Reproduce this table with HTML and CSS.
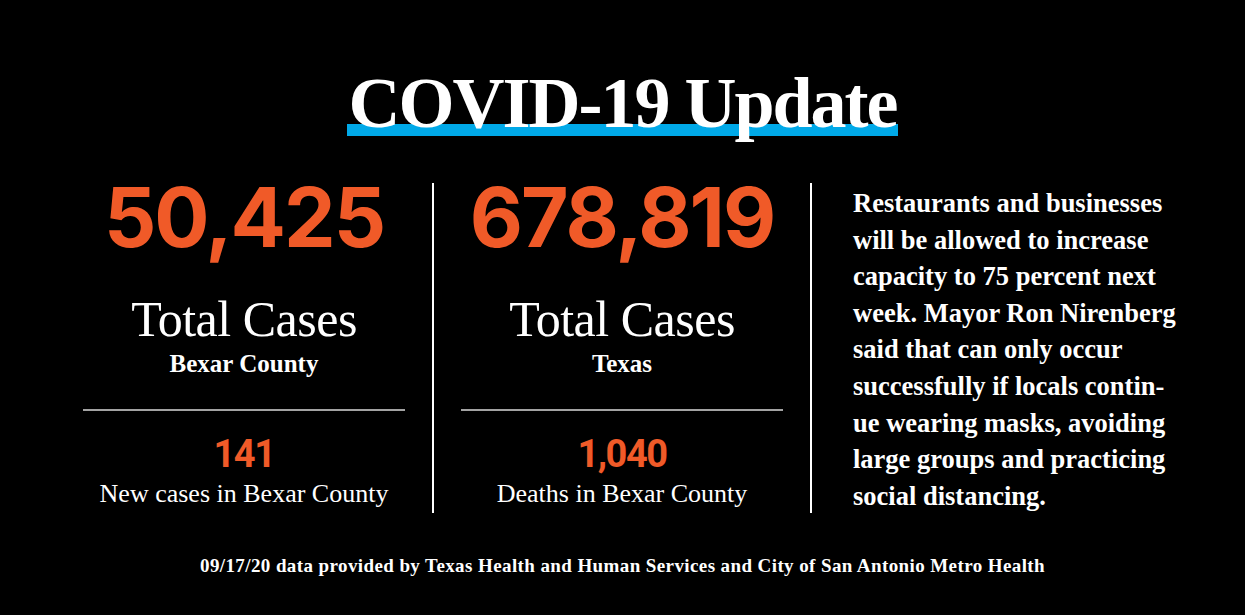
FILE: index.html
```html
<!DOCTYPE html>
<html lang="en">
<head>
<meta charset="utf-8">
<title>COVID-19 Update</title>
<link rel="stylesheet" href="styles.css">
</head>
<body>
<main class="card">
  <header class="head">
    <h1 class="title">COVID-19 Update</h1>
  </header>
  <section class="stats">
    <div class="stat">
      <div class="big">50,425</div>
      <div class="label">Total Cases</div>
      <div class="region">Bexar County</div>
      <hr class="rule">
      <div class="small">141</div>
      <div class="caption">New cases in Bexar County</div>
    </div>
    <div class="sep"></div>
    <div class="stat">
      <div class="big">678,819</div>
      <div class="label">Total Cases</div>
      <div class="region">Texas</div>
      <hr class="rule">
      <div class="small">1,040</div>
      <div class="caption">Deaths in Bexar County</div>
    </div>
    <div class="sep"></div>
    <p class="note">Restaurants and businesses<br>will be allowed to increase<br>capacity to 75 percent next<br>week. Mayor Ron Nirenberg<br>said that can only occur<br>successfully if locals contin-<br>ue wearing masks, avoiding<br>large groups and practicing<br>social distancing.</p>
  </section>
  <footer class="source">09/17/20 data provided by Texas Health and Human Services and City of San Antonio Metro Health</footer>
</main>
</body>
</html>
```
FILE: styles.css
```css
html, body {
  margin: 0;
  padding: 0;
  background: #000;
}

.card {
  width: 1245px;
  height: 615px;
  background: #000;
  color: #fff;
  font-family: "Liberation Serif", "Times New Roman", serif;
  overflow: hidden;
}

.head {
  display: flex;
  justify-content: center;
  padding-top: 67px;
}

.title {
  margin: 0;
  font-family: "Liberation Serif", serif;
  font-weight: 700;
  font-size: 72px;
  line-height: 72px;
  letter-spacing: -2px;
  padding: 0 1px 0 1px;
  background: linear-gradient(to bottom, transparent 0, transparent 57px, #00a9e8 57px, #00a9e8 69px, transparent 69px);
}

.stats {
  display: flex;
  gap: 27px;
  margin-top: 44px;
  padding-left: 83px;
  height: 330px;
}

.stat {
  width: 322px;
  display: flex;
  flex-direction: column;
  align-items: center;
}

.sep {
  width: 2px;
  background: #fff;
  align-self: stretch;
}

.big {
  font-family: Inter, "Liberation Sans", sans-serif;
  font-weight: 700;
  font-size: 82px;
  line-height: 70px;
  letter-spacing: -2px;
  color: #f05a28;
}

.label {
  margin-top: 41px;
  font-size: 50px;
  line-height: 50px;
  letter-spacing: -0.5px;
}

.region {
  margin-top: 6px;
  font-weight: 700;
  font-size: 25px;
  line-height: 28px;
}

.rule {
  width: 100%;
  margin: 31px 0 0 0;
  border: 0;
  height: 2px;
  background: #a3a3a3;
}

.small {
  margin-top: 23px;
  font-family: Roboto, "Liberation Sans", sans-serif;
  font-weight: 700;
  font-size: 38px;
  line-height: 40px;
  letter-spacing: -1.5px;
  color: #f05a28;
}

.caption {
  margin-top: 5px;
  font-size: 26px;
  line-height: 30px;
}

.note {
  margin: 2px 0 0 0;
  padding-left: 14px;
  font-weight: 700;
  font-size: 26.5px;
  line-height: 36.6px;
  white-space: nowrap;
}

.source {
  margin-top: 42px;
  text-align: center;
  font-weight: 700;
  font-size: 19px;
  line-height: 22px;
  letter-spacing: 0.4px;
}
```
